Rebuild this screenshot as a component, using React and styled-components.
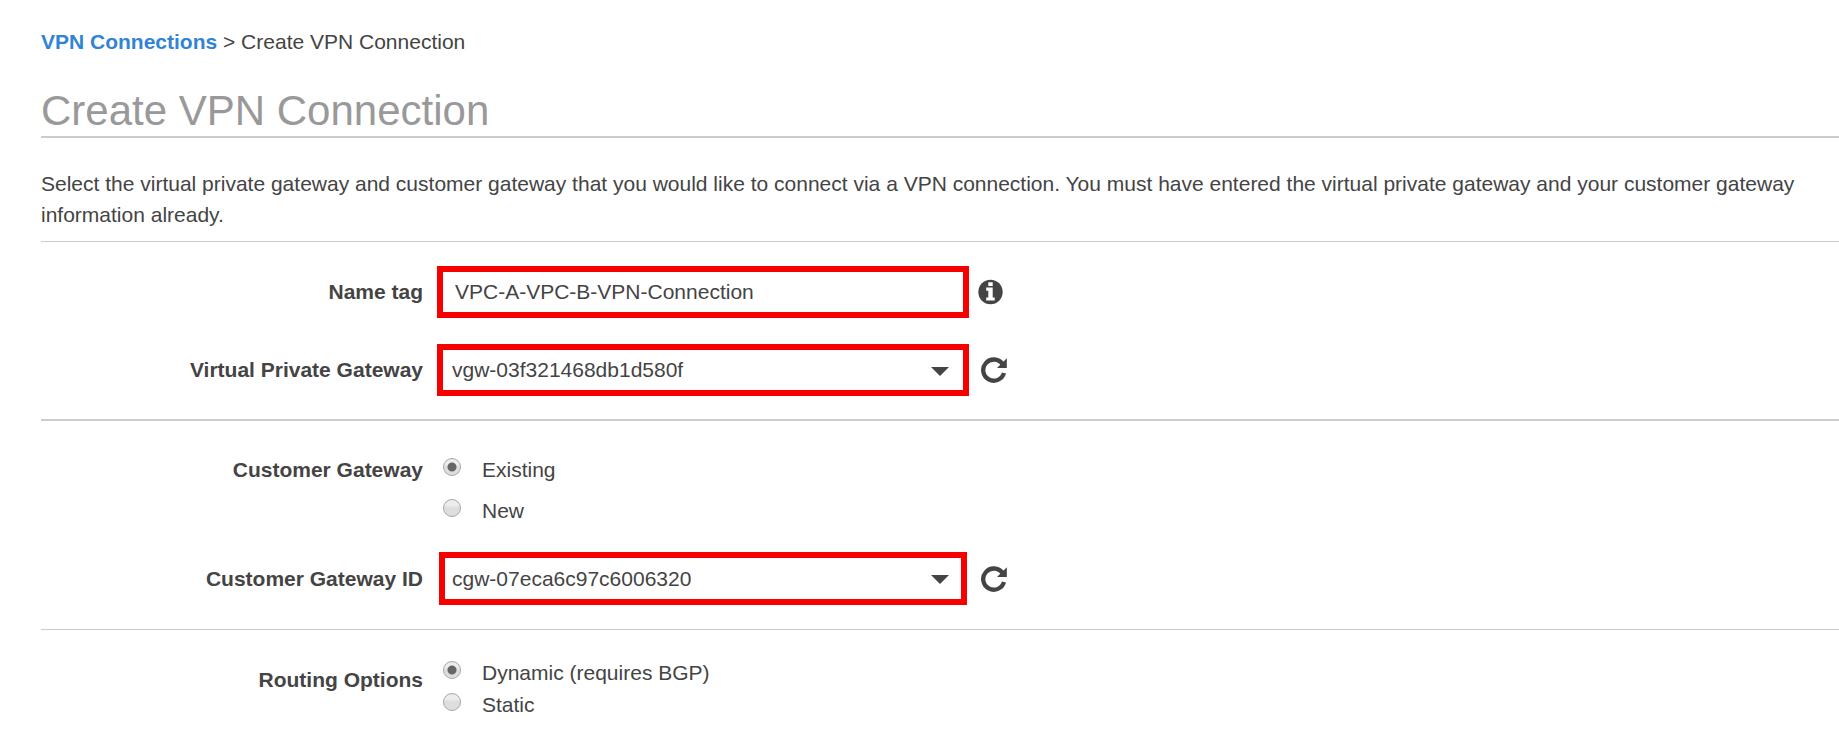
import React, { useState } from "react";
import styled, { createGlobalStyle } from "styled-components";

const GlobalStyle = createGlobalStyle`
  body {
    margin: 0;
    background: #fff;
    color: #444;
    font: 21px/31px "Liberation Sans", Arial, sans-serif;
  }
  *, *::before, *::after { box-sizing: border-box; }
`;

const Page = styled.main`
  padding: 26px 0 0 41px;
`;

const Breadcrumb = styled.nav`
  margin-bottom: 30px;
`;

const BreadcrumbLink = styled.a`
  color: #3184d5;
  font-weight: bold;
  text-decoration: none;
`;

const Title = styled.h1`
  margin: 0;
  padding-bottom: 1px;
  border-bottom: 2px solid #ccc;
  color: #999;
  font-size: 42px;
  font-weight: normal;
  line-height: 48px;
`;

const Description = styled.p`
  margin: 0;
  padding: 30px 38px 11px 0;
`;

const Section = styled.section`
  display: flex;
  flex-direction: column;
  gap: 26px;
  padding: ${(p) => p.$top}px 0 ${(p) => p.$bottom}px;
  border-top: ${(p) => p.$rule}px solid #ccc;
`;

const Row = styled.div`
  display: grid;
  grid-template-columns: 382px 532px auto;
  column-gap: 14px;
  justify-content: start;
  align-items: ${(p) => (p.$align ? p.$align : "center")};
`;

const Label = styled.label`
  padding-bottom: 1px;
  font-weight: bold;
  text-align: right;
`;

const GroupLabel = styled.span`
  padding-top: ${(p) => p.$drop || 0}px;
  font-weight: bold;
  text-align: right;
`;

const Slot = styled.div`
  position: relative;
  display: flex;
  justify-content: center;
`;

const TextField = styled.input`
  width: 100%;
  height: 52px;
  padding: 0 12px;
  border: 6px solid #f90000;
  border-radius: 0;
  background: #fff;
  color: #444;
  font: inherit;
  outline: none;
`;

const SelectField = styled.select`
  width: ${(p) => (p.$narrow ? 528 : 532)}px;
  height: ${(p) => (p.$narrow ? 53 : 52)}px;
  padding: 0 40px 1px ${(p) => (p.$narrow ? 7 : 9)}px;
  border: 6px solid #f90000;
  border-radius: 0;
  background: #fff;
  color: #444;
  font: inherit;
  appearance: none;
  outline: none;
`;

const Caret = styled.svg`
  position: absolute;
  top: 23px;
  right: 20px;
  width: 18px;
  height: 9px;
  fill: #444;
  pointer-events: none;
`;

const IconButton = styled.button`
  display: flex;
  margin: 0 0 0 -5px;
  padding: 0;
  border: 0;
  background: none;
  color: #444;
  cursor: pointer;
`;

const RadioList = styled.div`
  display: flex;
  flex-direction: column;
  gap: ${(p) => p.$gap}px;
  padding-left: 6px;
`;

const RadioOption = styled.label`
  display: flex;
  align-items: flex-start;
  gap: 21px;
`;

const Radio = styled.input`
  flex: none;
  width: 18px;
  height: 18px;
  margin: 4px 0 0;
  border: 1px solid #a6a6a6;
  border-radius: 50%;
  background: linear-gradient(#ededed 30%, #dedede 50%);
  appearance: none;

  &:checked {
    background:
      radial-gradient(circle, #666 4px, transparent 5px),
      linear-gradient(#ededed 30%, #dedede 50%);
  }
`;

const InfoIcon = () => (
  <svg width="28" height="28" viewBox="0 0 28 28" aria-hidden="true">
    <circle cx="12.5" cy="14" r="12.2" fill="currentColor" />
    <path
      fill="#fff"
      d="M10.3 4.3h4.4v3.6h-4.4zM8.2 9.6h6.5v9.8h2v3.2H8.2v-3.2h2.1v-6.6H8.2z"
    />
  </svg>
);

const RefreshIcon = () => (
  <svg width="30" height="28" viewBox="-2 0 30 28" aria-hidden="true">
    <path
      d="M24 17A10.6 10.6 0 1 1 22.4 7.9"
      fill="none"
      stroke="currentColor"
      strokeWidth="4.3"
    />
    <path fill="currentColor" d="M26.8 2.2v9.8H17z" />
  </svg>
);

function GatewaySelect({ id, label, value, narrow }) {
  return (
    <Row>
      <Label htmlFor={id}>{label}</Label>
      <Slot>
        <SelectField id={id} defaultValue={value} $narrow={narrow}>
          <option value={value}>{value}</option>
        </SelectField>
        <Caret viewBox="0 0 18 9" aria-hidden="true">
          <path d="M0 0h18L9 9z" />
        </Caret>
      </Slot>
      <IconButton type="button" aria-label={`Refresh ${label}`}>
        <RefreshIcon />
      </IconButton>
    </Row>
  );
}

function RadioRow({ name, label, options, gap, drop }) {
  const [selected, setSelected] = useState(options[0]);
  return (
    <Row $align="start" role="radiogroup" aria-labelledby={`${name}-label`}>
      <GroupLabel id={`${name}-label`} $drop={drop}>
        {label}
      </GroupLabel>
      <RadioList $gap={gap}>
        {options.map((option) => (
          <RadioOption key={option}>
            <Radio
              type="radio"
              name={name}
              value={option}
              checked={selected === option}
              onChange={() => setSelected(option)}
            />
            {option}
          </RadioOption>
        ))}
      </RadioList>
    </Row>
  );
}

export default function App() {
  return (
    <>
      <GlobalStyle />
      <Page>
        <Breadcrumb aria-label="Breadcrumb">
          <BreadcrumbLink href="#vpn-connections">VPN Connections</BreadcrumbLink>
          {" > Create VPN Connection"}
        </Breadcrumb>
        <Title>Create VPN Connection</Title>
        <Description>
          Select the virtual private gateway and customer gateway that you would
          like to connect via a VPN connection. You must have entered the virtual
          private gateway and your customer gateway information already.
        </Description>
        <Section $top={24} $bottom={23} $rule={1}>
          <Row>
            <Label htmlFor="name-tag">Name tag</Label>
            <Slot>
              <TextField
                id="name-tag"
                type="text"
                defaultValue="VPC-A-VPC-B-VPN-Connection"
              />
            </Slot>
            <IconButton type="button" aria-label="About the name tag">
              <InfoIcon />
            </IconButton>
          </Row>
          <GatewaySelect
            id="virtual-private-gateway"
            label="Virtual Private Gateway"
            value="vgw-03f321468db1d580f"
          />
        </Section>
        <Section $top={33} $bottom={24} $rule={2}>
          <RadioRow
            name="customer-gateway"
            label="Customer Gateway"
            options={["Existing", "New"]}
            gap={10}
          />
          <GatewaySelect
            id="customer-gateway-id"
            label="Customer Gateway ID"
            value="cgw-07eca6c97c6006320"
            narrow
          />
        </Section>
        <Section $top={27} $bottom={24} $rule={1}>
          <RadioRow
            name="routing-options"
            label="Routing Options"
            options={["Dynamic (requires BGP)", "Static"]}
            gap={1}
            drop={7}
          />
        </Section>
      </Page>
    </>
  );
}
